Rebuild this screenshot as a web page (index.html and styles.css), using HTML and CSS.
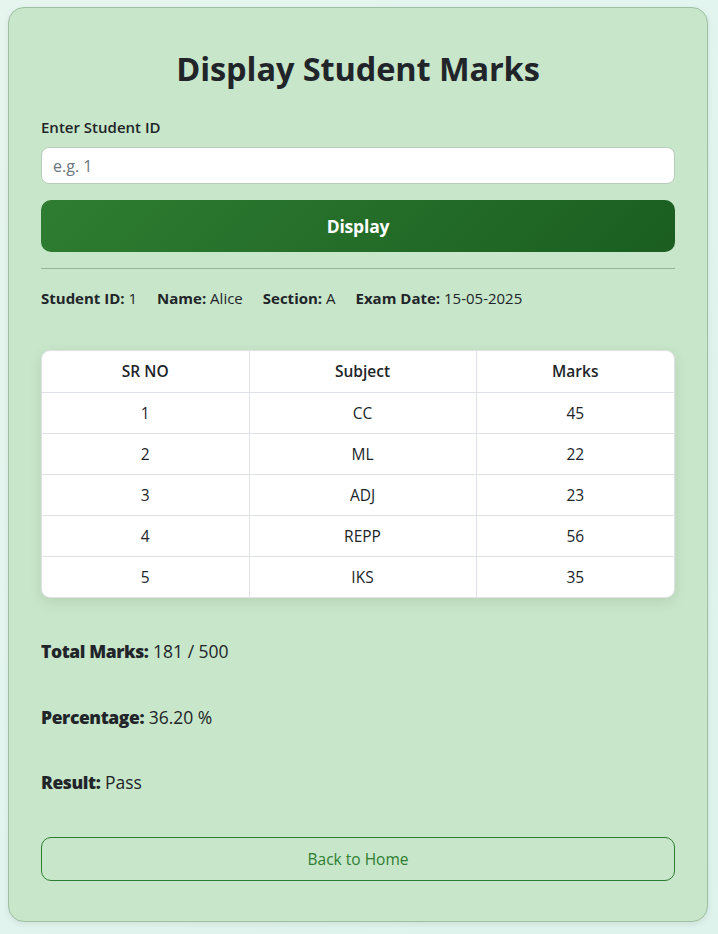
FILE: index.html
```html
<!DOCTYPE html>
<html lang="en">
<head>
<meta charset="utf-8">
<title>Display Student Marks</title>
<link rel="stylesheet" href="styles.css">
</head>
<body>
<main class="card">
  <h1 class="title">Display Student Marks</h1>
  <form class="form">
    <label class="label" for="sid">Enter Student ID</label>
    <input class="input" id="sid" type="text" placeholder="e.g. 1">
    <button class="btn-primary" type="button">Display</button>
  </form>
  <hr class="divider">
  <div class="info">
    <span><b>Student ID:</b> 1</span>
    <span><b>Name:</b> Alice</span>
    <span><b>Section:</b> A</span>
    <span><b>Exam Date:</b> 15-05-2025</span>
  </div>
  <div class="table-wrap">
    <table class="marks">
      <thead>
        <tr><th>SR NO</th><th>Subject</th><th>Marks</th></tr>
      </thead>
      <tbody>
        <tr><td>1</td><td>CC</td><td>45</td></tr>
        <tr><td>2</td><td>ML</td><td>22</td></tr>
        <tr><td>3</td><td>ADJ</td><td>23</td></tr>
        <tr><td>4</td><td>REPP</td><td>56</td></tr>
        <tr><td>5</td><td>IKS</td><td>35</td></tr>
      </tbody>
    </table>
  </div>
  <div class="summary">
    <p class="sum-line"><b>Total Marks:</b> 181 / 500</p>
    <p class="sum-line"><b>Percentage:</b> 36.20 %</p>
    <p class="sum-line"><b>Result:</b> Pass</p>
  </div>
  <a class="btn-outline" href="#">Back to Home</a>
</main>
</body>
</html>
```
FILE: styles.css
```css
* { box-sizing: border-box; }
html, body { margin: 0; }
body {
  background: linear-gradient(135deg, #e6f6ef, #ddf3ec);
  font-family: "Open Sans", "Noto Sans", sans-serif;
  color: #212529;
  padding: 7px 10px 13px 8px;
  min-height: 934px;
}
.card {
  width: 700px;
  background: #c8e6c9;
  border: 1px solid #9fbfa3;
  border-radius: 16px;
  padding: 41px 32px 40px;
  box-shadow: 0 2px 6px rgba(0,0,0,0.08);
}
.title {
  margin: 0 0 29px;
  text-align: center;
  font-size: 32.5px;
  font-weight: 700;
  line-height: 1.2;
  letter-spacing: -0.1px;
}
.form { display: flex; flex-direction: column; }
.label {
  font-size: 15px;
  font-weight: 600;
  line-height: 20px;
  margin-bottom: 10px;
}
.input {
  height: 37px;
  border: 1px solid #b9ccbb;
  border-radius: 8px;
  background: #fff;
  padding: 0 11px;
  font: inherit;
  font-size: 16px;
  margin-bottom: 16px;
}
.input::placeholder { color: #6c757d; }
.btn-primary {
  height: 52px;
  border: 0;
  border-radius: 10px;
  background: linear-gradient(135deg, #2e7d32, #1b5e20);
  color: #fff;
  font: inherit;
  font-size: 17.5px;
  font-weight: 700;
  letter-spacing: -0.2px;
}
.divider {
  border: 0;
  border-top: 1px solid #98b39b;
  margin: 16px 0 18px;
}
.info {
  display: flex;
  gap: 20px;
  font-size: 15px;
  line-height: 22px;
}
.info b { font-weight: 700; }
.table-wrap {
  margin-top: 41px;
  background: #fff;
  border-radius: 9px;
  overflow: hidden;
  box-shadow: 0 4px 14px rgba(0,0,0,0.09);
  border: 1px solid #dee2e6;
}
.marks {
  width: 100%;
  border-collapse: collapse;
  font-size: 15.5px;
  text-align: center;
}
.marks th, .marks td {
  height: 41px;
  border: 1px solid #dee2e6;
  padding: 0 8px;
}
.marks tr:first-child th { border-top: 0; }
.marks tr:last-child td { border-bottom: 0; }
.marks th:first-child, .marks td:first-child { border-left: 0; width: 207px; }
.marks th:last-child, .marks td:last-child { border-right: 0; width: 198px; }
.marks th { font-weight: 600; }
.summary { margin-top: 42px; }
.sum-line {
  margin: 0 0 42.5px;
  font-size: 17.5px;
  line-height: 23px;
}
.sum-line b { font-weight: 800; letter-spacing: -0.4px; }
.btn-outline {
  display: flex;
  align-items: center;
  justify-content: center;
  height: 44px;
  border: 1px solid #2e7d32;
  border-radius: 10px;
  color: #2e7d32;
  text-decoration: none;
  font-size: 15.5px;
  font-weight: 500;
}
.summary + .btn-outline { margin-top: 8px; }
```
